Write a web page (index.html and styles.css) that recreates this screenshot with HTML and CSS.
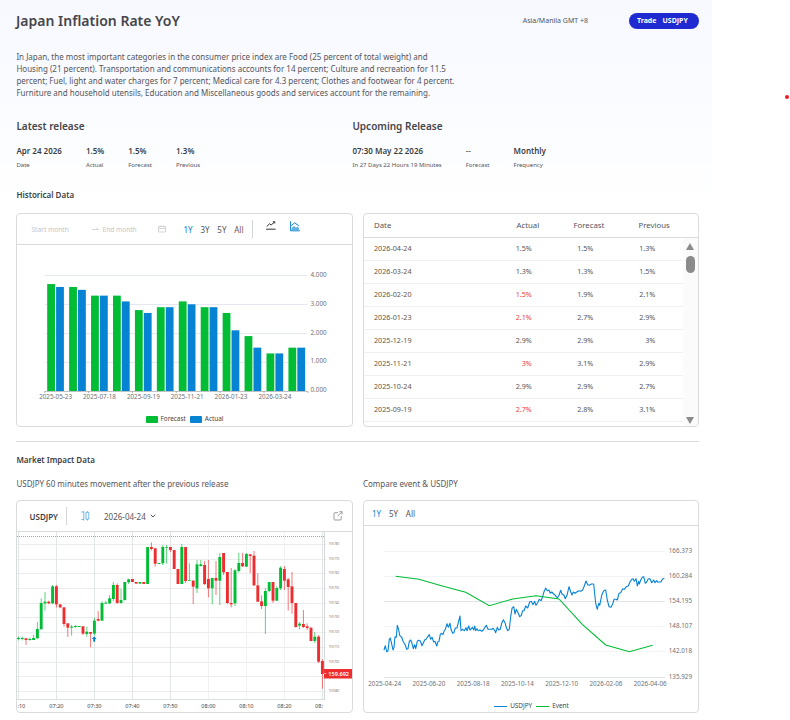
FILE: index.html
```html
<!DOCTYPE html>
<html lang="en">

<head>
    <meta charset="UTF-8">
    <meta name="viewport" content="width=device-width, initial-scale=1.0">
    <title>Japan Inflation Rate YoY</title>
    <link rel="stylesheet" href="styles.css">
</head>

<body>
    <div class="container">
        <header class="page-header">
            <h1>Japan Inflation Rate YoY</h1>
            <span class="timezone">Asia/Manila GMT +8</span>
            <a class="trade-btn"><span>Trade</span><span>USDJPY</span></a>
        </header>

        <p class="description">In Japan, the most important categories in the consumer price index are Food (25 percent of total weight) and<br>Housing (21 percent). Transportation and communications accounts for 14 percent; Culture and recreation for 11.5<br>percent; Fuel, light and water charges for 7 percent; Medical care for 4.3 percent; Clothes and footwear for 4 percent.<br>Furniture and household utensils, Education and Miscellaneous goods and services account for the remaining.</p>

        <div class="releases">
            <section class="release">
                <h2>Latest release</h2>
                <div class="facts">
                    <div><strong>Apr 24 2026</strong><small>Date</small></div>
                    <div><strong>1.5%</strong><small>Actual</small></div>
                    <div><strong>1.5%</strong><small>Forecast</small></div>
                    <div><strong>1.3%</strong><small>Previous</small></div>
                </div>
            </section>
            <section class="release">
                <h2>Upcoming Release</h2>
                <div class="facts">
                    <div><strong>07:30 May 22 2026</strong><small>In 27 Days 22 Hours 19 Minutes</small></div>
                    <div><strong class="empty">--</strong><small>Forecast</small></div>
                    <div><strong>Monthly</strong><small>Frequency</small></div>
                </div>
            </section>
        </div>

        <h3 class="section-title">Historical Data</h3>
        <div class="cards">
            <div class="card">
                <div class="card-header history-header">
                    <div class="date-range">
                        <span class="start">Start month</span>
                        <svg class="arrow" viewBox="0 0 7 4"><path d="M0 2.5h6.5L4.500.7" /></svg>
                        <span class="end">End month</span>
                        <svg class="calendar" viewBox="0 0 8 8"><path d="M.5 1.500h7v5.500h-7zM.5 3.500h7M2.300.3v2M5.700.3v2" /></svg>
                    </div>
                    <div class="tabs">
                        <span class="active">1Y</span><span>3Y</span><span>5Y</span><span class="warm">All</span>
                    </div>
                    <div class="separator"></div>
                    <svg class="line-icon" viewBox="0 0 10 9"><path d="M.7 5.600 3.500 2.800 5.200 3.900 8.800.9M6.800.8h2v1.600M.2 8.200h9.400" /></svg>
                    <svg class="area-icon" viewBox="0 0 10 11"><path class="fill" d="M1.500 9V7.200L4 5l2 1.600L7.500 5.500 9 7v2z" /><path d="M.6.3v9.500h9.200M1.500 4.500 4.600 1.800 8.800 4.700" /></svg>
                </div>
                <svg id="historyChart" class="history-chart" viewBox="17 245 335 168"></svg>
                <div class="legend">
                    <span><i class="swatch green"></i>Forecast</span>
                    <span><i class="swatch blue"></i>Actual</span>
                </div>
            </div>

            <div class="card">
                <div class="table-head">
                    <span>Date</span><span>Actual</span><span>Forecast</span><span>Previous</span>
                </div>
                <div class="table-wrap">
                    <div id="historyRows" class="rows"></div>
                    <div class="scrollbar">
                        <i class="up"></i>
                        <i class="thumb"></i>
                        <i class="down"></i>
                    </div>
                </div>
            </div>
        </div>

        <hr>

        <h3 class="section-title market-title">Market Impact Data</h3>
        <div class="subtitles">
            <p>USDJPY 60 minutes movement after the previous release</p>
            <p>Compare event &amp; USDJPY</p>
        </div>
        <div class="cards">
            <div class="card">
                <div class="card-header market-header">
                    <strong>USDJPY</strong>
                    <div class="separator"></div>
                    <svg class="candle-icon" viewBox="0 0 9 10"><path d="M.3 1h2.500v7.500H.3M2.800.2v1M2.800 8.500v1M5 1.300h2.800v6.800H5zM6.400.2v1M6.400 8.100v1.500" /></svg>
                    <span class="event-date">2026-04-24</span>
                    <svg class="chevron" viewBox="0 0 6 4"><path d="M.8.8 3 3 5.200.8" /></svg>
                    <svg class="open-icon" viewBox="0 0 10 10"><path d="M5 1.700H1.900Q1 1.700 1 2.600v5.500Q1 9 1.900 9h5.400q.9 0 .9-.9V5M6.200.7h2.900v2.900M9 .8 4.600 5.300" /></svg>
                </div>
                <svg id="candleChart" class="candle-chart" viewBox="17 532 335 180"></svg>
            </div>

            <div class="card">
                <div class="card-header compare-header">
                    <div class="tabs">
                        <span class="active">1Y</span><span>5Y</span><span>All</span>
                    </div>
                </div>
                <svg id="compareChart" class="compare-chart" viewBox="364 526 334 174"></svg>
                <div class="legend compare-legend">
                    <span><i class="dash blue"></i>USDJPY</span>
                    <span><i class="dash green"></i>Event</span>
                </div>
            </div>
        </div>
    </div>
    <div class="live-dot"></div>

    <script src="script.js"></script>
</body>

</html>
```
FILE: styles.css
```css
* {
    box-sizing: border-box;
}

body {
    margin: 0;
    height: 720px;
    overflow: hidden;
    background: #fff;
    color: #55555c;
    font-family: 'Noto Sans', sans-serif;
    font-size: 8px;
}

h1,
h2,
h3,
p {
    margin: 0;
}

svg {
    display: block;
    fill: none;
    stroke: currentColor;
    flex: none;
}

.container {
    width: 712px;
    height: 720px;
    padding: 0 13px 0 16px;
    background: linear-gradient(#f8f9ff 0, #f9fbff 90px, #fff 205px);
}

.page-header {
    display: flex;
    align-items: center;
    height: 41px;
}

.page-header h1 {
    flex: 1;
    color: #46464b;
    font-size: 14px;
    font-weight: 600;
}

.timezone {
    margin-right: 41px;
    font-size: 7px;
}

.trade-btn {
    display: flex;
    gap: 6px;
    width: 70px;
    height: 16px;
    padding-left: 8px;
    border-radius: 8px;
    background: #1f2bd1;
    color: #fff;
    font-size: 7px;
    font-weight: 700;
    line-height: 15px;
}

.description {
    margin-top: 10px;
    padding-left: 0.4px;
    font-size: 8px;
    line-height: 12px;
    white-space: nowrap;
}

.releases {
    display: grid;
    grid-template-columns: 336px 1fr;
    margin-top: 20px;
    padding-left: 0.4px;
    height: 70px;
}

.release h2 {
    color: #46464b;
    font-size: 10px;
    font-weight: 600;
    line-height: 14px;
}

.facts {
    display: flex;
    gap: 24px;
    margin-top: 12px;
}

.facts strong,
.facts small {
    display: block;
    white-space: nowrap;
}

.facts strong {
    color: #3d3d42;
    font-size: 8px;
    font-weight: 600;
    line-height: 12px;
}

.facts .empty {
    font-weight: 400;
}

.facts small {
    margin-top: 3px;
    font-size: 6px;
    line-height: 10px;
}

.section-title {
    padding-left: 0.4px;
    color: #3d3d42;
    font-size: 8px;
    font-weight: 600;
    line-height: 12px;
}

.cards {
    display: grid;
    grid-template-columns: 337px 336px;
    gap: 10px;
    margin-top: 12px;
}

.card {
    height: 214px;
    border: 1px solid #d9dbdd;
    border-radius: 4px;
    background: #fff;
    overflow: hidden;
}

.card-header {
    display: flex;
    align-items: center;
    border-bottom: 1px solid #d9dbdd;
}

.history-header {
    height: 31px;
    padding-left: 14.500px;
}

.date-range {
    display: flex;
    align-items: center;
    width: 134px;
    color: #c4c4c8;
    font-size: 6.6px;
}

.date-range .start {
    width: 60px;
}

.date-range .end {
    width: 55px;
}

.arrow {
    width: 7px;
    height: 4px;
    margin-right: 4px;
    stroke-width: 0.7;
}

.calendar {
    width: 8px;
    height: 8px;
    stroke-width: 0.7;
}

.tabs {
    display: flex;
    gap: 7.8px;
    font-size: 8px;
}

.history-header .tabs {
    margin-left: 18px;
}

.tabs .active {
    color: #0783d4;
}

.tabs .warm {
    color: #7a5443;
}

.separator {
    width: 1px;
    height: 18px;
    background: #d2d4d7;
}

.history-header .separator {
    margin-left: 9px;
}

.line-icon {
    width: 10px;
    height: 9px;
    margin: -7px 0 0 13px;
    color: #333;
}

.area-icon {
    width: 10px;
    height: 11px;
    margin: -6px 0 0 14px;
    color: #0783d4;
}

.area-icon .fill {
    fill: #64b2e3;
    stroke: none;
}

.history-chart {
    width: 335px;
    height: 168px;
}

.legend {
    display: flex;
    justify-content: center;
    gap: 4px;
    font-size: 6.4px;
    line-height: 12px;
    color: #444;
}

.legend span {
    display: flex;
    align-items: center;
}

.swatch {
    width: 12px;
    height: 7px;
    margin-right: 3px;
    border-radius: 1px;
}

.dash {
    width: 13px;
    height: 1px;
    margin-right: 3px;
}

.blue {
    background: #0783d4;
}

.green {
    background: #00bd35;
}

/* Historical table */
.table-head {
    display: flex;
    height: 24px;
    padding-left: 10px;
    border-bottom: 1px solid #d9dbdd;
    font-size: 7.8px;
    line-height: 23px;
}

.table-head span:nth-child(1) {
    width: 142.5px;
}

.table-head span:nth-child(2) {
    width: 57px;
}

.table-head span:nth-child(3) {
    width: 65px;
}

.table-wrap {
    display: flex;
    height: 188px;
}

.rows {
    width: 319px;
    overflow: hidden;
}

.row {
    display: grid;
    grid-template-columns: 97.8px 60px 61.5px 62px;
    height: 23px;
    padding-left: 10px;
    border-bottom: 1px solid #f0f0f1;
    font-size: 7.2px;
    line-height: 21px;
}

.row span {
    text-align: right;
}

.row span:first-child {
    text-align: left;
    color: #685444;
}

.row .worse {
    color: #ed3a45;
}

.scrollbar {
    display: flex;
    flex-direction: column;
    align-items: center;
    width: 15px;
    padding: 5px 1px 2px 0;
    background: #fbfbfb;
}

.scrollbar .up,
.scrollbar .down {
    border: 4.5px solid transparent;
}

.scrollbar .up {
    border-top: 0;
    border-bottom: 7px solid #8b8b8b;
}

.scrollbar .down {
    margin-top: auto;
    border-bottom: 0;
    border-top: 7px solid #8b8b8b;
}

.scrollbar .thumb {
    width: 9px;
    height: 17px;
    margin-top: 6px;
    border-radius: 5px;
    background: #8b8b8b;
}

hr {
    height: 1px;
    margin: 14px 0 12px;
    border: 0;
    background: #d9dbdd;
}

.market-title {
    margin-bottom: 12px;
}

.subtitles {
    display: grid;
    grid-template-columns: 346.5px 1fr;
    padding-left: 0.4px;
    font-size: 8px;
    line-height: 12px;
}

.subtitles + .cards {
    margin-top: 10px;
}

.subtitles ~ .cards .card {
    height: 213px;
}

.market-header {
    height: 31px;
    padding: 0 9px 0 12.500px;
}

.market-header strong {
    width: 36.5px;
    color: #3d3d42;
    font-size: 8px;
    font-weight: 600;
}

.candle-icon {
    width: 9px;
    height: 10px;
    margin-left: 14px;
    color: #3a9bd9;
    stroke-width: 0.7;
}

.event-date {
    width: 42px;
    margin-left: 14px;
    font-size: 8px;
}

.chevron {
    width: 6px;
    height: 4px;
    margin-left: 4px;
}

.open-icon {
    width: 10px;
    height: 10px;
    margin-left: auto;
    color: #85858a;
    stroke-width: 0.8;
}

.candle-chart {
    width: 335px;
    height: 180px;
}

.compare-header {
    height: 25px;
    padding-left: 8px;
}

.compare-chart {
    width: 334px;
    height: 174px;
}

.compare-legend {
    padding-left: 1px;
}

svg text {
    stroke: none;
    fill: #6e7079;
}

.middle {
    text-anchor: middle;
}

.axis-label {
    font-size: 6.3px;
}

.time-label {
    font-size: 5.6px;
    fill: #444;
}

.price-label {
    font-size: 2.8px;
}

svg .last-price {
    font-size: 5.6px;
    font-weight: 600;
    fill: #fff;
}

.live-dot {
    position: absolute;
    left: 785px;
    top: 95px;
    width: 4px;
    height: 4px;
    border-radius: 50%;
    background: #e81d25;
}
```
FILE: script.js
```js
const GREEN = '#00bd35';
const BLUE = '#0783d4';
const RED = '#ed2d2f';

function add(parent, tag, attrs, text) {
    const el = document.createElementNS('http://www.w3.org/2000/svg', tag);
    for (const key in attrs) el.setAttribute(key, attrs[key]);
    if (text) el.textContent = text;
    parent.appendChild(el);
    return el;
}

function line(parent, x1, y1, x2, y2, stroke, width = 1) {
    return add(parent, 'line', { x1, y1, x2, y2, stroke, 'stroke-width': width });
}

function rect(parent, x, y, width, height, fill) {
    return add(parent, 'rect', { x, y, width, height, fill, stroke: 'none' });
}

// Table rows: date, actual, forecast, previous, actual below forecast
const rows = [
    ['2026-04-24', '1.5%', '1.5%', '1.3%'],
    ['2026-03-24', '1.3%', '1.3%', '1.5%'],
    ['2026-02-20', '1.5%', '1.9%', '2.1%', true],
    ['2026-01-23', '2.1%', '2.7%', '2.9%', true],
    ['2025-12-19', '2.9%', '2.9%', '3%'],
    ['2025-11-21', '3%', '3.1%', '2.9%', true],
    ['2025-10-24', '2.9%', '2.9%', '2.7%'],
    ['2025-09-19', '2.7%', '2.8%', '3.1%', true]
];

function displayRows() {
    document.getElementById('historyRows').innerHTML = rows.map(r => `
        <div class="row">
            <span>${r[0]}</span><span${r[4] ? ' class="worse"' : ''}>${r[1]}</span><span>${r[2]}</span><span>${r[3]}</span>
        </div>`).join('');
}

function drawHistory() {
    const svg = document.getElementById('historyChart');
    const forecast = [3.7, 3.6, 3.3, 3.3, 2.8, 2.9, 3.1, 2.9, 2.7, 1.9, 1.3, 1.5];
    const actual = [3.6, 3.5, 3.3, 3.1, 2.7, 2.9, 3, 2.9, 2.1, 1.5, 1.3, 1.5];
    const dates = ['2025-05-23', '2025-07-18', '2025-09-19', '2025-11-21', '2026-01-23', '2026-03-24'];
    const base = 391, unit = 28.9, left = 44.7, step = 21.93;

    for (let v = 0; v <= 4; v++) {
        const y = Math.floor(base - v * unit) + 0.5;
        if (v) line(svg, left, y, 307, y, '#e4e8f0');
        add(svg, 'text', { x: 310.5, y: base - v * unit + 1.3, class: 'axis-label' }, v.toFixed(3));
    }
    forecast.forEach((f, i) => {
        const x = left + 2.5 + i * step;
        rect(svg, x, base - f * unit, 7.8, f * unit, GREEN);
        rect(svg, x + 8.9, base - actual[i] * unit, 7.8, actual[i] * unit, BLUE);
    });
    line(svg, left, 391.5, 307.5, 391.5, '#bfc1c5');
    for (let i = 0; i < 7; i++) line(svg, left + i * step * 2, 391, left + i * step * 2, 393, '#999', 0.7);
    dates.forEach((d, i) => {
        add(svg, 'text', { x: 55.6 + i * step * 2, y: 399.3, class: 'axis-label middle' }, d);
    });
}

// Candles: direction, body top, body bottom, wick top, wick bottom (thirds of a pixel)
const candles = `g339,342,334,346 g339,342,334,346 r340,345,340,360 g342,345,338,347 g339,345,330,345
g312,340,291,340 g234,313,220,313 g230,235,201,257 r230,235,227,238 g184,235,180,237
r184,238,180,248 r238,247,238,250 r247,297,247,305 r295,308,295,336 g305,308,300,332
g303,306,300,308 g303,306,303,306 r304,326,304,330 g320,327,305,335 r321,326,321,367
g287,326,278,332 r282,287,258,289 g234,287,229,287 g233,236,228,236 g220,235,210,237
g180,222,171,228 r180,234,175,236 g225,234,191,236 g171,225,171,227 g163,172,161,177
r162,171,162,171 r171,176,171,176 g171,176,171,176 r171,177,171,177 g66,177,66,177
r66,72,52,77 r70,116,68,125 g114,117,114,117 g66,115,60,120 g66,68,60,116
r66,75,66,81 r75,132,75,132 r132,177,132,177 g66,177,57,177 r66,168,66,174
g165,167,115,167 r167,185,165,237 g118,190,105,204 g118,123,105,125 r120,177,108,180
r162,190,105,217 g159,190,159,238 r159,167,108,210 g96,167,84,240 r84,142,84,150
r141,234,141,237 r234,238,129,247 g136,235,132,243 g114,138,84,143 r114,124,84,126
g87,125,84,126 r88,93,88,144 r92,181,78,183 r181,230,145,231 r229,243,211,252
g198,243,190,327 g171,198,171,202 r171,227,171,234 g189,227,184,228 g128,190,124,195
r132,167,123,195 r163,186,159,257 r184,234,141,266 r234,306,234,308 g296,302,291,313
r297,306,255,309 r304,309,295,315 r308,348,308,348 g335,348,321,354 r335,410,330,414
r408,447,403,491`.split(/\s+/);

function drawCandles() {
    const svg = document.getElementById('candleChart');
    const left = 18.4, step = 3.8;

    for (let i = 0; i < 11; i++) {
        const y = Math.floor(544.4 + i * 14.7) + 0.5;
        line(svg, 17, y, 326, y, '#ebeced');
        if (i !== 9) {
            add(svg, 'text', { x: 328.7, y: y + 0.7, class: 'price-label' }, (159.78 - i * 0.01).toFixed(3));
        }
    }
    ['', '07:20', '07:30', '07:40', '07:50', '08:00', '08:10', '08:20', ''].forEach((t, i) => {
        const x = left + i * step * 10;
        line(svg, Math.floor(x) + 0.5, 532, Math.floor(x) + 0.5, 700, i > 4 && i < 8 ? '#f0f1f2' : '#e2e6e7');
        if (t) add(svg, 'text', { x, y: 708, class: 'time-label middle' }, t);
    });
    // the outer hours only show the part inside the plot
    add(svg, 'text', { x: 17.4, y: 708, class: 'time-label' }, ':10');
    add(svg, 'text', { x: 315, y: 708, class: 'time-label' }, '08:');
    line(svg, 17, 699.5, 324, 699.5, '#dcdfe1');
    line(svg, 324.5, 532, 324.5, 700, '#d5d8da');
    line(svg, 17, 536.5, 324, 536.5, '#62cd82').setAttribute('stroke-dasharray', '1 1');

    candles.forEach((c, i) => {
        const color = c[0] === 'g' ? GREEN : RED;
        const [top, bottom, high, low] = c.slice(1).split(',').map(v => 525 + v / 3);
        const x = left + i * step;
        line(svg, x, high, x, low, color, 0.65);
        rect(svg, x - 1.45, top, 2.9, bottom - top, color);
    });

    add(svg, 'path', { d: 'M94.200 636.300l2.400 2.800h-1.400v2.600h-2v-2.600h-1.400z', fill: BLUE, stroke: 'none' });
    rect(svg, 324, 669, 28, 9.5, RED);
    line(svg, 324, 673.5, 326, 673.5, '#fff', 0.6);
    add(svg, 'text', { x: 328.3, y: 675.8, class: 'last-price' }, '159.692');
}

// Points of the comparison chart, in thirds of a pixel
const usdjpy = `87,630 91,617 95,635 99,633 103,598 106,594 110,612 114,630 117,622 120,590 124,592 127,556
131,570 134,586 140,592 145,605 151,615 155,628 159,626 163,604 167,600 171,610 175,626 179,614 182,626
187,604 191,601 196,603 201,617 205,609 209,600 213,598 217,592 223,584 227,598 231,592 236,606 240,604
245,618 249,605 252,604 256,583 260,580 264,584 268,572 271,568 276,551 280,562 285,550 288,568 293,580
297,578 301,564 306,564 310,548 315,528 318,572 323,568 328,572 333,563 336,572 341,558 345,570 349,566
352,562 356,570 359,558 362,572 366,566 370,572 375,570 380,574 385,570 390,562 394,556 399,568 404,568
410,568 414,565 419,571 422,578 427,562 431,570 436,568 440,550 445,539 450,548 454,562 458,572 463,568
467,530 471,505 476,500 480,522 484,508 490,520 494,530 499,526 503,512 507,512 512,498 518,504 524,486
529,484 534,494 539,484 543,496 548,488 553,478 558,482 563,470 567,455 572,444 577,452 582,450 586,460
590,456 596,462 601,466 607,474 612,466 617,451 621,462 627,466 631,476 636,466 642,440 647,455 651,465
655,456 660,460 665,456 671,452 677,454 683,450 688,438 693,423 698,434 703,436 709,432 716,432 719,462
722,490 727,508 731,490 734,496 740,466 746,452 752,450 757,480 762,500 768,502 773,492 777,478 783,478
787,480 792,460 797,458 803,446 808,448 814,440 820,438 825,426 830,418 834,416 838,424 843,416 847,438
851,424 853,432 857,420 862,412 866,410 871,430 875,426 880,416 885,416 890,428 896,420 900,428 905,422
909,427 914,426 918,426 922,418 928,415`;
const eventLine = `122,409 192,418 262,438 332,457 403,497 473,477 543,467 612,477 682,553 752,615 823,635 893,616`;

function drawCompare() {
    const svg = document.getElementById('compareChart');
    const prices = ['166.373', '160.284', '154.195', '148.107', '142.018', '135.929'];
    const dates = ['2025-04-24', '2025-06-20', '2025-08-18', '2025-10-14', '2025-12-10', '2026-02-06', '2026-04-06'];

    prices.forEach((p, i) => {
        const y = 551 + i * 25.2;
        line(svg, 384, Math.floor(y) + 0.5, 665, Math.floor(y) + 0.5, i === 2 || i === 5 ? '#dfe3ec' : '#f1f3f7');
        add(svg, 'text', { x: 668.7, y: y + 1.5, class: 'axis-label' }, p);
    });
    dates.forEach((d, i) => {
        add(svg, 'text', { x: 384.7 + i * 44.25, y: 685.6, class: 'axis-label middle' }, d);
    });
    const toPage = points => points.trim().split(/\s+/).map(p => {
        const [x, y] = p.split(',');
        return `${(355 + x / 3).toFixed(1)},${(440 + y / 3).toFixed(1)}`;
    }).join(' ');
    add(svg, 'polyline', { points: toPage(usdjpy), stroke: BLUE, 'stroke-width': 1.1, 'stroke-linejoin': 'round' });
    add(svg, 'polyline', { points: toPage(eventLine), stroke: GREEN, 'stroke-width': 1.1 });
}

displayRows();
drawHistory();
drawCandles();
drawCompare();
```
